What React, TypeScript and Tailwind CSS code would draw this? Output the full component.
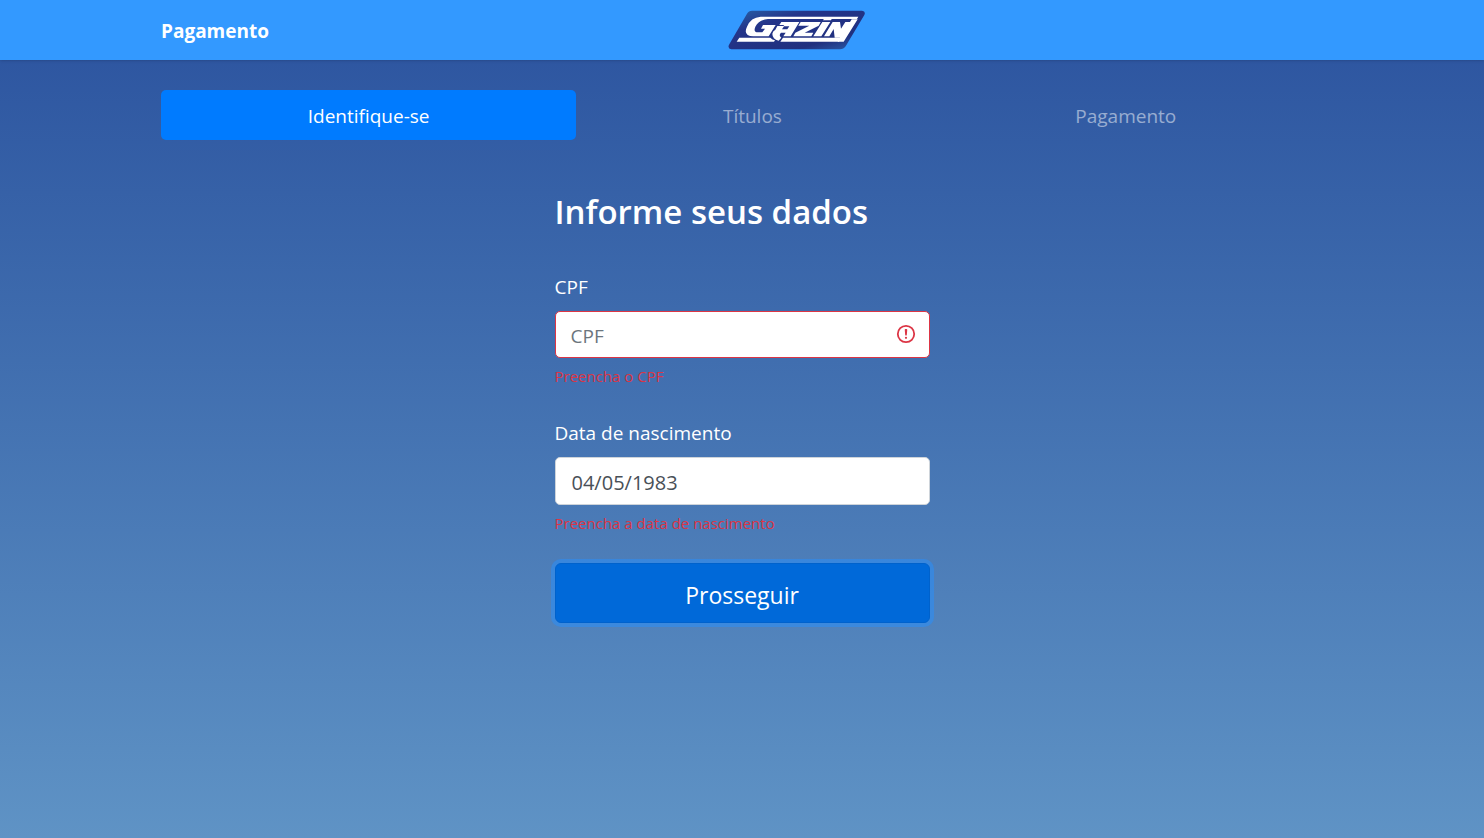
import { useState } from "react";

const steps = ["Identifique-se", "Títulos", "Pagamento"];

function Logo() {
  return (
    <svg viewBox="36 30 411 120" className="h-10 w-[137px]" role="img" aria-label="Gazin">
      <defs>
        <linearGradient id="plate" x1="0" y1="0" x2="1" y2="1">
          <stop offset="0" stopColor="#2764a8" />
          <stop offset="0.3" stopColor="#24358a" />
          <stop offset="0.75" stopColor="#20307f" />
          <stop offset="1" stopColor="#2c62ad" />
        </linearGradient>
      </defs>
      <path d="M108 32H438Q450 34 445 45L389 139Q383 148 372 148H46Q34 146 39 134L93 41Q98 32 108 32Z" fill="url(#plate)" />
      <g fill="#fff">
        <path d="M134 50H427L423 57H156Q129 60 118 80Q111 97 126 97H139L147 86H135L141 75H179L158 109H112Q80 107 93 80Q104 52 134 50Z" />
        <path d="M70 113H163Q169 119 177 121L174 125H62Z" />
        <path fillRule="evenodd" d="M196 66H250L224 109H202L209 98H195Q187 105 196 113L188 122Q169 117 169 101Q170 93 178 89L184 78H202L205 75H190ZM204 79L198 88H214L220 79Z" />
        <path d="M254 66H314L308 77L266 98H292L286 109H232L238 98L280 77H247Z" />
        <path d="M319 66H343L316 109H292ZM326 53H349L345 61H321Z" />
        <path d="M350 66H372L375 86L388 66H402L407 58H425L383 125H365L372 113H356L353 87L340 109H324Z" />
        <path d="M201 113H377L369 125H193Z" />
      </g>
    </svg>
  );
}

function ErrorIcon() {
  return (
    <svg viewBox="0 0 20 20" fill="none" stroke="#dc3545" className="pointer-events-none absolute top-[13px] right-3.5 size-5" aria-hidden="true">
      <circle cx="10" cy="10" r="8.2" strokeWidth="1.8" />
      <path d="M9.6 5.8h.8L10 10.8z" strokeWidth="1.7" strokeLinejoin="round" />
      <circle cx="10" cy="13.8" r="1.1" fill="#dc3545" stroke="none" />
    </svg>
  );
}

export default function App() {
  const [active, setActive] = useState(0);
  const [cpf, setCpf] = useState("");
  const [birth, setBirth] = useState("04/05/1983");

  return (
    <div className="min-h-screen bg-linear-to-b from-[#2b529e] to-[#5f93c5] font-['Open_Sans','Noto_Sans',sans-serif] text-[19px] text-white">
      <header className="bg-[#3399ff] shadow-sm">
        <div className="mx-auto flex h-15 max-w-[1200px] items-center justify-between px-[19px]">
          <a href="#" className="pt-0.5 font-bold">Pagamento</a>
          <Logo />
          <span />
        </div>
      </header>

      <main className="mx-auto max-w-[1200px] px-[19px] pt-[30px]">
        <nav className="flex">
          {steps.map((step, i) => (
            <button
              key={step}
              type="button"
              onClick={() => setActive(i)}
              className={
                i === active
                  ? "h-[50px] flex-auto rounded-[5px] bg-[#007bff] px-5 pt-0.5"
                  : "h-[50px] flex-auto rounded-[5px] px-5 pt-0.5 text-white/50"
              }
            >
              {step}
            </button>
          ))}
        </nav>

        <form className="mx-auto flex max-w-[375px] flex-col pt-12" onSubmit={(e) => e.preventDefault()}>
          <h1 className="text-[33px] leading-12 font-semibold">Informe seus dados</h1>

          <label htmlFor="cpf" className="mt-9 leading-[30px]">CPF</label>
          <div className="relative mt-[9px]">
            <input
              id="cpf"
              placeholder="CPF"
              value={cpf}
              onChange={(e) => setCpf(e.target.value)}
              className="block h-[47px] w-full rounded-[5px] border border-[#dc3545] bg-white px-[15px] pt-0.5 text-[#495057] outline-none placeholder:text-[#6c757d]"
            />
            <ErrorIcon />
          </div>
          <p className="mt-1.5 text-[15px] leading-6 text-[#dc3545]">Preencha o CPF</p>

          <label htmlFor="birth" className="mt-[30px] leading-[30px]">Data de nascimento</label>
          <input
            id="birth"
            value={birth}
            onChange={(e) => setBirth(e.target.value)}
            className="mt-[9px] h-12 w-full rounded-[5px] border border-[#ced4da] bg-white px-4 pt-0.5 text-xl text-[#495057] outline-none"
          />
          <p className="mt-1.5 text-[15px] leading-6 text-[#dc3545]">Preencha a data de nascimento</p>

          <button
            type="submit"
            className="mt-7 h-15 rounded-md border border-[#0062cc] bg-[#0069d9] pt-1 text-[23px] ring-4 ring-[#268fff]/50"
          >
            Prosseguir
          </button>
        </form>
      </main>
    </div>
  );
}
